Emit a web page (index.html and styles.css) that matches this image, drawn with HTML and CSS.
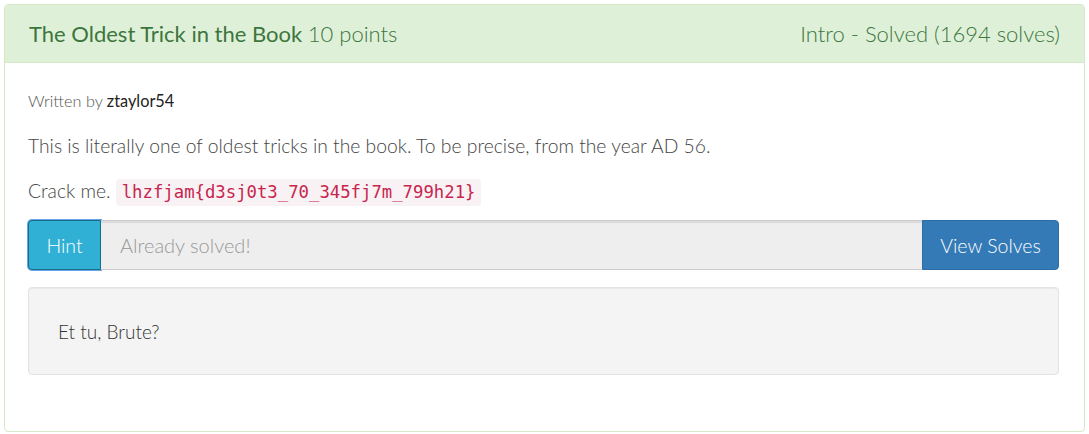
FILE: index.html
```html
<!DOCTYPE html>
<html>
<head>
<meta charset="utf-8">
<link rel="stylesheet" href="styles.css">
</head>
<body>
<div class="panel">
  <div class="panel-heading">
    <div class="title">The Oldest Trick in the Book <span class="points">10 points</span></div>
    <div class="status">Intro - Solved (1694 solves)</div>
  </div>
  <div class="panel-body">
    <div class="author">Written by <span class="name">ztaylor54</span></div>
    <p class="desc">This is literally one of oldest tricks in the book. To be precise, from the year AD 56.</p>
    <p class="desc">Crack me. <code>lhzfjam{d3sj0t3_70_345fj7m_799h21}</code></p>
    <div class="input-group">
      <button class="btn btn-hint">Hint</button>
      <input class="field" type="text" placeholder="Already solved!" disabled>
      <button class="btn btn-view">View Solves</button>
    </div>
    <div class="well">Et tu, Brute?</div>
  </div>
</div>
</body>
</html>
```
FILE: styles.css
```css
html, body { background: #fff; }
body {
  margin: 4px;
  font-family: Lato, "Open Sans", sans-serif;
  color: #333;
}
.panel {
  border: 1px solid #d6e9c6;
  border-radius: 4px;
  height: 428px;
  box-sizing: border-box;
  width: 1081px;
}
.panel-heading {
  background: #dff0d8;
  border-bottom: 1px solid #d6e9c6;
  border-radius: 3px 3px 0 0;
  display: flex;
  justify-content: space-between;
  align-items: center;
  height: 57px;
  padding: 0 24px;
  color: #3c763d;
}
.title { font-size: 22px; font-weight: 400; }
.points, .status { font-weight: 300; font-size: 22px; }
.panel-body {
  padding: 27px 25px 0 23px;
}
.author {
  font-size: 16.3px;
  line-height: 22px;
  color: #555;
  font-weight: 300;
  margin-bottom: 20px;
}
.author .name { color: #222; font-weight: 400; }
.desc {
  font-size: 19.3px;
  line-height: 27px;
  font-weight: 300;
  margin: 0 0 18px;
  color: #444;
}
code {
  font-family: "DejaVu Sans Mono", monospace;
  font-size: 17.3px;
  color: #c7254e;
  background: #f9f2f4;
  padding: 3px 6px 4px;
  border-radius: 4px;
}
.input-group {
  display: flex;
  margin-top: -4px;
  height: 50px;
}
.btn {
  font-family: inherit;
  font-size: 19.5px;
  font-weight: 300;
  color: #fff;
  border: 1px solid;
  padding: 0;
  white-space: nowrap;
}
.btn-hint {
  background: #31b0d5;
  border-color: #1b6d85;
  border-radius: 4px 0 0 4px;
  box-shadow: 0 0 0 1px #66a3f0;
  width: 73px;
}
.btn-view {
  background: #337ab7;
  border-color: #2e6da4;
  border-radius: 0 4px 4px 0;
  width: 137px;
}
.field {
  flex: 1;
  min-width: 0;
  background: #eee;
  border: 1px solid #ccc;
  border-left: none;
  border-right: none;
  box-shadow: inset 0 2px 1px rgba(0,0,0,.08);
  font-family: inherit;
  font-size: 20px;
  font-weight: 300;
  padding: 0 19px;
}
.field::placeholder { color: #999; }
.well {
  margin-top: 17px;
  background: #f4f4f4;
  border: 1px solid #e3e3e3;
  border-radius: 4px;
  height: 88px;
  box-sizing: border-box;
  padding: 0 29px;
  display: flex;
  align-items: center;
  font-size: 19px;
  font-weight: 300;
  box-shadow: inset 0 1px 1px rgba(0,0,0,.05);
}
```
